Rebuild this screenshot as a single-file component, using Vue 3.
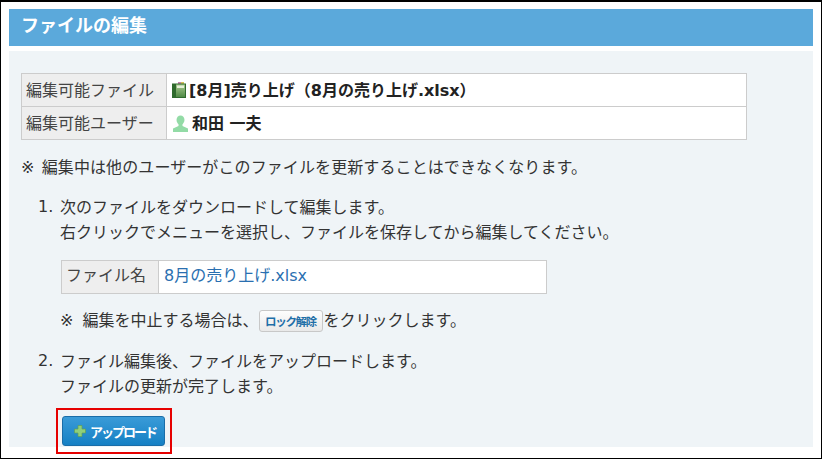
<script setup>
const rows = [
  { label: '編集可能ファイル', kind: 'file', value: '[8月]売り上げ（8月の売り上げ.xlsx）' },
  { label: '編集可能ユーザー', kind: 'user', value: '和田 一夫' }
]
</script>

<template>
  <div class="frame">
    <h1 class="title">ファイルの編集</h1>
    <main class="panel">
      <table class="info">
        <tbody>
          <tr v-for="row in rows" :key="row.label">
            <th>{{ row.label }}</th>
            <td>
              <span class="value">
                <svg v-if="row.kind === 'file'" class="ico-file" viewBox="0 0 16 16" width="16" height="16">
                  <defs>
                    <linearGradient id="book" x1="0" y1="0" x2="0" y2="1">
                      <stop offset="0" stop-color="#a9c98f" />
                      <stop offset="1" stop-color="#4f8a45" />
                    </linearGradient>
                  </defs>
                  <rect x="7" y="0" width="3" height="2" fill="#c77fb0" />
                  <rect x="10" y="0" width="3" height="2" fill="#d8c25a" />
                  <rect x="1" y="1.500" width="14" height="14.500" fill="#2f6a2d" />
                  <rect x="5" y="2.500" width="9" height="12.500" fill="url(#book)" />
                  <rect x="6" y="3.500" width="7" height="2.500" fill="#e6f0d8" />
                </svg>
                <svg v-else class="ico-user" viewBox="0 0 17 17" width="17" height="17">
                  <ellipse cx="8.5" cy="5" rx="4" ry="4.6" fill="#93dba6" />
                  <path d="M6.5 9h4v2l5.5 2.5V17H1v-3.500L6.500 11z" fill="#93dba6" />
                </svg>
                <b>{{ row.value }}</b>
              </span>
            </td>
          </tr>
        </tbody>
      </table>

      <p class="note">※ 編集中は他のユーザーがこのファイルを更新することはできなくなります。</p>

      <ol class="steps">
        <li>
          <span class="num">1.</span>
          <div class="step-body">
            <p>次のファイルをダウンロードして編集します。<br />右クリックでメニューを選択し、ファイルを保存してから編集してください。</p>
            <div class="file-row">
              <span class="file-label">ファイル名</span>
              <a class="file-link">8月の売り上げ.xlsx</a>
            </div>
            <p class="sub-note">※ 編集を中止する場合は、<button class="unlock" type="button">ロック解除</button>をクリックします。</p>
          </div>
        </li>
        <li>
          <span class="num">2.</span>
          <div class="step-body">
            <p>ファイル編集後、ファイルをアップロードします。<br />ファイルの更新が完了します。</p>
            <div class="highlight">
              <button class="upload" type="button">
                <svg viewBox="0 0 12 12" width="12" height="12">
                  <path d="M4 0.500h4v3.500h3.500v4h-3.500v3.500h-4v-3.500H0.500v-4h3.500z" fill="#8fcf7a" stroke="#5f9f58" stroke-width="0.700" />
                </svg>
                <span>アップロード</span>
              </button>
            </div>
          </div>
        </li>
      </ol>
    </main>
  </div>
</template>

<style scoped>
.frame {
  width: 822px;
  height: 459px;
  box-sizing: border-box;
  border-style: solid;
  border-color: #000;
  border-width: 2px 1px 1px 1px;
  background: #fff;
  padding: 7px 8px 0;
  font-family: "DejaVu Sans", "Noto Sans CJK JP", sans-serif;
  font-size: 16px;
  color: #333;
  overflow: hidden;
}
.title {
  margin: 0;
  height: 37px;
  background: #5ba9db;
  color: #fff;
  font-size: 18px;
  font-weight: 700;
  line-height: 34px;
  padding-left: 12px;
}
.panel {
  margin-top: 5px;
  height: 396px;
  box-sizing: border-box;
  background: #eff4f7;
  padding: 22px 12px 0;
}
.info {
  width: 726px;
  border-collapse: collapse;
  table-layout: fixed;
}
.info th, .info td {
  border: 1px solid #ccc;
  height: 33px;
  padding: 0;
  box-sizing: border-box;
}
.info th {
  width: 145px;
  background: #eee;
  font-weight: 400;
  text-align: left;
  padding: 0 0 3px 4px;
  color: #444;
}
.info td {
  background: #fff;
  padding-left: 4px;
}
.value {
  display: flex;
  align-items: center;
  gap: 1px;
  color: #222;
}
.value b { margin-bottom: 3px; }
.ico-file { margin-right: 1px; }
.ico-user { margin-left: 1px; margin-right: 2px; }
.note {
  margin: 17px 0 0;
  line-height: 22px;
  word-spacing: 2px;
  letter-spacing: 0.1px;
}
.steps {
  list-style: none;
  margin: 16px 0 0;
  padding: 0 0 0 17px;
}
.steps li {
  display: flex;
}
.steps li + li { margin-top: 15px; }
.num {
  width: 22px;
  line-height: 24px;
}
.step-body p {
  margin: 0;
  line-height: 25px;
}
.file-row {
  display: flex;
  width: 486px;
  height: 34px;
  margin: 15px 0 0 1px;
  box-sizing: border-box;
  border: 1px solid #ccc;
  background: #fff;
}
.file-label {
  width: 97px;
  box-sizing: border-box;
  background: #eee;
  border-right: 1px solid #ccc;
  padding-left: 4px;
  line-height: 30px;
  color: #444;
}
.file-link {
  padding-left: 5px;
  line-height: 30px;
  color: #2a6fb0;
}
.step-body .sub-note {
  margin-top: 14px;
  line-height: 26px;
  display: flex;
  align-items: center;
  word-spacing: 4px;
}
.unlock {
  height: 22px;
  width: 64px;
  margin: 0 1px 0 0;
  padding: 0;
  border: 1px solid #c8c8c8;
  border-radius: 3px;
  background: linear-gradient(#fdfdfd, #e9e9e9);
  color: #1f6fa8;
  font: 700 11.500px "Noto Sans CJK JP", sans-serif;
  letter-spacing: -1.300px;
}
.highlight {
  width: 116px;
  height: 46px;
  margin: 9px 0 0 -4px;
  box-sizing: border-box;
  border: 2px solid #e60000;
  padding: 6px 0 0 4px;
}
.upload {
  width: 103px;
  height: 30px;
  display: flex;
  align-items: center;
  gap: 4px;
  padding: 0 0 0 11px;
  border: 1px solid #1a6da8;
  border-radius: 3px;
  background: linear-gradient(#3a9bd8, #1580c4);
  color: #fff;
  font: 700 13px "Noto Sans CJK JP", sans-serif;
  letter-spacing: -2px;
}
</style>
